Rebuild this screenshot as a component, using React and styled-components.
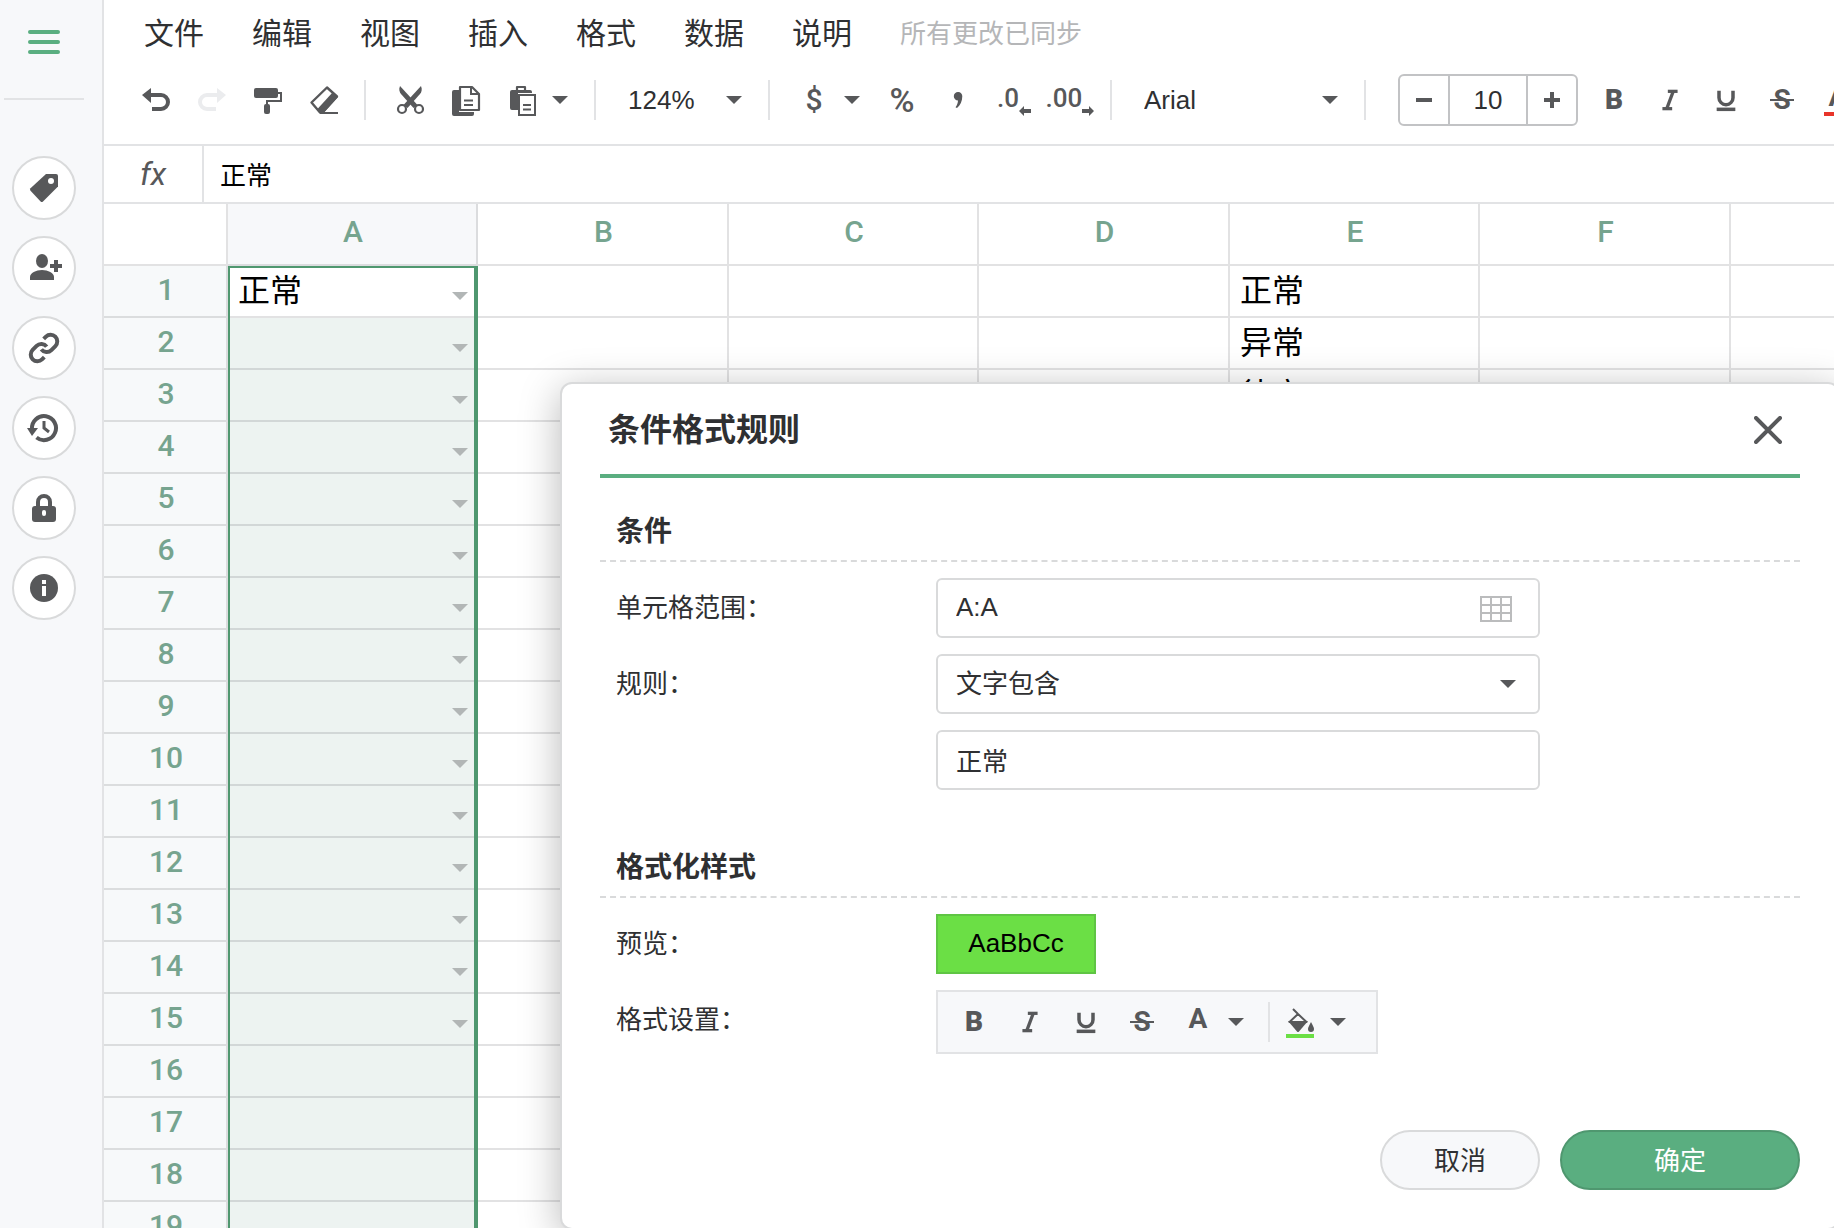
import React, { useState } from "react";
import styled, { createGlobalStyle, css } from "styled-components";
import { Italic, Underline, Link as LinkIcon } from "lucide-react";

const color = {
  text: "#2f3032",
  icon: "#57585a",
  muted: "#b5b6b8",
  line: "#e2e3e5",
  field: "#d9dadb",
  panel: "#f7f8fa",
  green: "#5aae80",
  greenDark: "#4f976f",
  heading: "#76a48f",
  fill: "#6bdf45",
};

const GlobalStyle = createGlobalStyle`
  *, *::before, *::after { box-sizing: border-box; }
  body {
    margin: 0;
    background: #fff;
    color: ${color.text};
    font-family: "Liberation Sans", "Noto Sans CJK SC", sans-serif;
    font-size: 26px;
  }
  button, input, select {
    margin: 0;
    padding: 0;
    border: 0;
    outline: 0;
    background: none;
    color: inherit;
    font: inherit;
  }
  button { cursor: pointer; }
`;

const Page = styled.div`
  position: relative;
  display: flex;
  height: 100vh;
  overflow: hidden;
`;

/* ---------- Side rail ---------- */

const Sidebar = styled.nav`
  flex: none;
  display: flex;
  flex-direction: column;
  width: 104px;
  padding-left: 4px;
  background: ${color.panel};
  border-right: 2px solid ${color.line};
`;

const MenuToggle = styled.button`
  display: flex;
  flex-direction: column;
  justify-content: center;
  align-items: center;
  gap: 6px;
  width: 80px;
  height: 98px;
  padding-bottom: 14px;

  span {
    width: 32px;
    height: 4px;
    border-radius: 2px;
    background: ${color.green};
  }
`;

const RailDivider = styled.hr`
  width: 80px;
  height: 2px;
  margin: 0;
  border: 0;
  background: ${color.line};
`;

const RailList = styled.div`
  display: flex;
  flex-direction: column;
  gap: 16px;
  padding: 56px 8px 0;
`;

const RoundButton = styled.button`
  display: grid;
  place-items: center;
  width: 64px;
  height: 64px;
  border: 2px solid ${color.field};
  border-radius: 50%;
  background: #fff;
  color: ${color.icon};
`;

/* ---------- Top area ---------- */

const Main = styled.main`
  flex: 1;
  min-width: 0;
  display: flex;
  flex-direction: column;
`;

const MenuBar = styled.div`
  flex: none;
  display: flex;
  align-items: center;
  gap: 48px;
  height: 66px;
  padding: 2px 0 0 40px;
  white-space: nowrap;
`;

const MenuItem = styled.button`
  font-size: 30px;
  line-height: 40px;
`;

const SyncState = styled.span`
  color: ${color.muted};
  line-height: 40px;
`;

const Toolbar = styled.div`
  flex: none;
  display: flex;
  align-items: center;
  height: 80px;
  padding: 0 0 10px 24px;
  overflow: hidden;
  border-bottom: 2px solid ${color.line};
`;

const Divider = styled.span`
  flex: none;
  width: 2px;
  height: 40px;
  margin: 0 ${(p) => p.$after ?? 16}px 0 ${(p) => p.$before ?? 12}px;
  background: ${color.line};
`;

const Tool = styled.button`
  flex: none;
  display: flex;
  align-items: center;
  justify-content: center;
  width: 56px;
  height: 40px;
  color: ${(p) => (p.disabled ? "#ebecee" : color.icon)};
`;

const CaretTool = styled.button`
  flex: none;
  display: flex;
  align-items: center;
  width: 32px;
  height: 40px;
  padding-left: 2px;
  color: ${color.icon};
`;

const Symbol = styled.span`
  font: 500 ${(p) => p.$size}px/32px Roboto, sans-serif;
`;

const Decimal = styled.span`
  display: flex;
  align-items: flex-end;
  height: 32px;
  font: 500 26px/28px Roboto, sans-serif;

  svg { flex: none; }
  span { align-self: flex-start; }
`;

const BoldMark = styled.span`
  font: 900 28px/32px Roboto, sans-serif;
`;

const StrikeMark = styled.span`
  display: grid;
  place-items: center;
  font: 700 28px/32px Roboto, sans-serif;

  &::before, span { grid-area: 1 / 1; }
  &::before {
    content: "";
    width: 24px;
    height: 2px;
    background: currentColor;
  }
`;

const SelectBox = styled.span`
  flex: none;
  display: grid;
  align-items: center;
  width: ${(p) => p.$width};

  > * { grid-area: 1 / 1; }
  > svg {
    justify-self: end;
    margin-right: ${(p) => p.$inset ?? 14}px;
    color: ${color.icon};
    pointer-events: none;
  }
`;

const ToolSelect = styled.select`
  appearance: none;
  width: 100%;
  height: 40px;
  padding: 0 32px 0 16px;
`;

const Stepper = styled.div`
  flex: none;
  display: flex;
  width: 180px;
  height: 52px;
  margin: 0 8px 0 16px;
  border: 2px solid #c2c3c5;
  border-radius: 6px;

  button {
    flex: none;
    display: grid;
    place-items: center;
    width: 48px;
    color: ${color.icon};
  }
  input {
    flex: 1;
    min-width: 0;
    border: solid #c2c3c5;
    border-width: 0 2px;
    text-align: center;
  }
`;

const ColorGlyph = styled.span`
  display: flex;
  flex-direction: column;
  align-items: center;
  gap: 2px;
  font: 700 28px/26px Roboto, sans-serif;

  &::after {
    content: "";
    width: 28px;
    height: 4px;
    background: ${(p) => p.$bar};
  }
`;

const FormulaBar = styled.div`
  flex: none;
  display: flex;
  height: 58px;
  border-bottom: 2px solid ${color.line};

  label {
    flex: none;
    width: 100px;
    border-right: 2px solid ${color.line};
    color: ${color.icon};
    font: italic 400 32px/56px Roboto, sans-serif;
    text-align: center;
  }
  input {
    flex: 1;
    min-width: 0;
    padding: 0 16px 2px;
    color: #000;
  }
`;

/* ---------- Grid ---------- */

const gridLine = "rgba(60, 62, 66, 0.15)";

const Sheet = styled.div`
  position: relative;
  flex: 1;
  min-height: 0;
  overflow: hidden;
`;

const Grid = styled.table`
  width: 100%;
  table-layout: fixed;
  border-collapse: separate;
  border-spacing: 0;

  th, td {
    height: 52px;
    padding: 0;
    border: solid ${gridLine};
    border-width: 0 2px 2px 0;
  }
  th:last-child, td:last-child { border-right-width: 0; }
`;

const headingText = css`
  padding: 0 0 2px 2px;
  color: ${color.heading};
  font: 500 30px/40px Roboto, sans-serif;
`;

const ColumnHead = styled.th`
  && {
    ${headingText}
    height: 62px;
    padding-bottom: 4px;
    background: ${(p) => (p.$active ? color.panel : "#fff")};
  }
`;

const RowHead = styled.th`
  && {
    ${headingText}
    background: #f7f9fa;
  }
`;

const Cell = styled.td`
  background: ${(p) => (p.$selected ? "#edf3f1" : "#fff")};
`;

const CellBody = styled.div`
  display: flex;
  align-items: center;
  justify-content: space-between;
  height: 50px;
  padding: 0 8px 0 10px;
  overflow: hidden;
  color: #000;
  font-size: 32px;
  line-height: 50px;
  white-space: nowrap;
`;

const CellDrop = styled.button`
  display: flex;
  margin-left: auto;
  padding-top: 10px;
  color: #b2b6b6;
`;

const Selection = styled.div`
  position: absolute;
  top: 62px;
  bottom: 0;
  left: 124px;
  width: 250px;
  border: solid ${color.greenDark};
  border-width: 2px 4px 0 2px;
  pointer-events: none;
`;

/* ---------- Rule window ---------- */

const Window = styled.section`
  position: absolute;
  top: 382px;
  left: 560px;
  width: 1280px;
  padding: 0 38px 38px;
  border: 2px solid ${color.field};
  border-radius: 12px;
  background: #fff;
  box-shadow: 0 8px 40px rgba(0, 0, 0, 0.28);
`;

const WindowHeader = styled.header`
  display: flex;
  align-items: center;
  justify-content: space-between;
  height: 94px;
  padding: 2px 18px 0 8px;
  border-bottom: 4px solid ${color.green};

  h2 {
    margin: 0;
    font-size: 32px;
    line-height: 48px;
  }
  button {
    display: flex;
    color: ${color.icon};
  }
`;

const Section = styled.section`
  margin-bottom: 24px;
`;

const SectionTitle = styled.h3`
  margin: 0 0 16px;
  padding: 34px 16px 8px;
  border-bottom: 2px dashed ${color.field};
  font-size: 28px;
  line-height: 40px;
`;

const Fields = styled.div`
  display: grid;
  grid-template-columns: 320px 604px;
  gap: 16px 0;
  padding-left: 16px;
`;

const Label = styled.label`
  grid-column: 1;
  line-height: 60px;
`;

const control = css`
  width: 100%;
  height: 60px;
  padding: 0 18px;
  border: 2px solid ${color.field};
  border-radius: 6px;
  background: #fff;
`;

const TextField = styled.input`
  grid-column: 2;
  ${control}
  padding-bottom: 2px;
`;

const SelectField = styled.select`
  appearance: none;
  ${control}
`;

const RangeField = styled.span`
  display: grid;
  align-items: center;

  > * { grid-area: 1 / 1; }
  button {
    justify-self: end;
    display: flex;
    margin-right: 28px;
    padding-top: 2px;
    color: #bbbcbd;
  }
`;

const Preview = styled.output`
  display: block;
  width: 160px;
  height: 60px;
  border: 2px solid #5fc544;
  background: ${color.fill};
  color: #000;
  line-height: 54px;
  text-align: center;
`;

const FormatBar = styled.div`
  display: flex;
  align-items: center;
  justify-self: start;
  width: 442px;
  height: 64px;
  padding-left: 8px;
  border: 2px solid ${color.line};
  background: ${color.panel};
`;

const Footer = styled.footer`
  display: flex;
  justify-content: flex-end;
  gap: 20px;
  padding-top: 52px;
`;

const ActionButton = styled.button`
  width: ${(p) => (p.$primary ? 240 : 160)}px;
  height: 60px;
  padding-bottom: 4px;
  border: 2px solid ${(p) => (p.$primary ? color.greenDark : color.field)};
  border-radius: 30px;
  background: ${(p) => (p.$primary ? color.green : color.panel)};
  color: ${(p) => (p.$primary ? "#fff" : color.text)};
`;

/* ---------- Icons ---------- */

const Glyph = ({ children }) => (
  <svg width="32" height="32" viewBox="0 0 32 32" fill="none" overflow="visible" aria-hidden="true">
    {children}
  </svg>
);

const Caret = () => (
  <svg width="16" height="8" viewBox="0 0 16 8" aria-hidden="true">
    <path d="M0 0h16L8 8z" fill="currentColor" />
  </svg>
);

const UndoIcon = () => (
  <Glyph>
    <path d="M2 11 11 4v15z" fill="currentColor" />
    <path d="M10 11h11a7 7 0 0 1 0 14h-9" stroke="currentColor" strokeWidth="4" />
  </Glyph>
);

const RedoIcon = () => (
  <Glyph>
    <path d="M30 11 21 4v15z" fill="currentColor" />
    <path d="M22 11H11a7 7 0 0 0 0 14h9" stroke="currentColor" strokeWidth="4" />
  </Glyph>
);

const RollerIcon = () => (
  <Glyph>
    <rect x="2" y="4" width="24" height="10" rx="2" fill="currentColor" />
    <path d="M26 9h3v8H15v4" stroke="currentColor" strokeWidth="2" />
    <rect x="12" y="20" width="6" height="10" rx="2" fill="currentColor" />
  </Glyph>
);

const EraserIcon = () => (
  <Glyph>
    <path d="M19 3.500 29 12.500 14.500 28.500H12L3.500 18.500z" stroke="currentColor" strokeWidth="2.400" strokeLinejoin="round" />
    <path d="M24.500 8.500 30 13 15 29.500h-3l-3-4z" fill="currentColor" />
    <path d="M12 29h18" stroke="currentColor" strokeWidth="2" />
  </Glyph>
);

const CutIcon = () => (
  <Glyph>
    <path d="M6 2c-1.500 3.500-.500 6 1 8l12.500 14 4-3z" fill="currentColor" />
    <path d="M27 2c1.500 3.500.500 6-1 8L13.500 24l-4-3z" fill="currentColor" />
    <circle cx="8" cy="25" r="4" fill="#fff" stroke="currentColor" strokeWidth="2.200" />
    <circle cx="25" cy="25" r="4" fill="#fff" stroke="currentColor" strokeWidth="2.200" />
  </Glyph>
);

const CopyIcon = () => (
  <Glyph>
    <path d="M2 8a2 2 0 0 1 2-2h5v22h15v2a2 2 0 0 1-2 2H4a2 2 0 0 1-2-2z" fill="currentColor" />
    <path d="M10 3h12l7 7v16H10z" stroke="currentColor" strokeWidth="2.200" strokeLinejoin="round" />
    <path d="M21 3v7h8M14 16.500h9M14 21h9" stroke="currentColor" strokeWidth="2" />
  </Glyph>
);

const PasteIcon = () => (
  <Glyph>
    <path d="M6 6h18a2 2 0 0 1 2 2v1H12v17H6a2 2 0 0 1-2-2V8a2 2 0 0 1 2-2z" fill="currentColor" />
    <path d="M11 8V3h8v5" stroke="currentColor" strokeWidth="2.200" strokeLinejoin="round" />
    <path d="M13 11h16v20H13zM17 21h8M17 25.500h8" stroke="currentColor" strokeWidth="2" />
  </Glyph>
);

const SeparatorIcon = () => (
  <Glyph>
    <path d="M16 8a4 4 0 0 1 4.300 4.200c0 5-2 9.300-5.300 11.800l-1.500-.800c1.600-2 2.400-4.300 2.500-6.800A4.200 4.200 0 1 1 16 8z" fill="currentColor" />
  </Glyph>
);

const ShiftArrow = ({ right }) => (
  <svg width="12" height="10" viewBox="0 0 12 10" aria-hidden="true">
    <path d={right ? "M12 5 7 0v3H0v4h7v3z" : "M0 5l5-5v3h7v4H5v3z"} fill="currentColor" />
  </svg>
);

const MinusIcon = () => (
  <svg width="16" height="16" viewBox="0 0 16 16" aria-hidden="true">
    <path d="M0 6h16v4H0z" fill="currentColor" />
  </svg>
);

const PlusIcon = () => (
  <svg width="16" height="16" viewBox="0 0 16 16" aria-hidden="true">
    <path d="M6 0h4v6h6v4h-6v6H6v-6H0V6h6z" fill="currentColor" />
  </svg>
);

const TagIcon = () => (
  <Glyph>
    <path
      d="M18 2h10a2 2 0 0 1 2 2v10.500L15 29.500q-1.200 1-2.400 0L2.500 18.700q-1-1.200 0-2.400z"
      fill="currentColor"
    />
    <circle cx="23" cy="9" r="3" fill="#fff" />
  </Glyph>
);

const AddPersonIcon = () => (
  <Glyph>
    <ellipse cx="14" cy="9" rx="6" ry="7" fill="currentColor" />
    <path d="M2 28v-3c0-4 6-7 12-7s12 3 12 7v3z" fill="currentColor" />
    <path d="M28 8v12M22 14h12" stroke="currentColor" strokeWidth="4" />
  </Glyph>
);

const HistoryIcon = () => (
  <Glyph>
    <path d="M4 17a12 12 0 1 1 4.500 8.500" stroke="currentColor" strokeWidth="4" />
    <path d="M-1 16h11l-6 8z" fill="currentColor" />
    <path d="M16 9v7l5 4" stroke="currentColor" strokeWidth="3" />
  </Glyph>
);

const LockIcon = () => (
  <Glyph>
    <path d="M10 15v-5a6 6 0 0 1 12 0v5" stroke="currentColor" strokeWidth="4" />
    <rect x="4" y="14" width="24" height="16" rx="3" fill="currentColor" />
    <rect x="14" y="18" width="4" height="6" rx="2" fill="#fff" />
  </Glyph>
);

const InfoIcon = () => (
  <Glyph>
    <circle cx="16" cy="16" r="14" fill="currentColor" />
    <path d="M14 8h4v4h-4zM14 14h4v10h-4z" fill="#fff" />
  </Glyph>
);

const BucketIcon = () => (
  <Glyph>
    <path d="M9 3l5 5M14 8l-8.500 8h17z" stroke="currentColor" strokeWidth="2" strokeLinejoin="round" />
    <path d="M4 15h20l-9 10.500q-1 1-2 0z" fill="currentColor" />
    <path d="M27 16c2 4 3 5.500 3 7a3 3 0 0 1-6 0c0-1.500 1-3 3-7z" fill="currentColor" />
    <path d="M2 28h28v4H2z" fill={color.fill} />
  </Glyph>
);

const RangeIcon = () => (
  <svg width="32" height="26" viewBox="0 0 32 26" fill="none" aria-hidden="true">
    <path d="M1 1h30v24H1zM1 9h30M1 17h30M11 1v24M21 1v24" stroke="currentColor" strokeWidth="2" />
  </svg>
);

const CloseIcon = () => (
  <svg width="28" height="28" viewBox="0 0 28 28" aria-hidden="true">
    <path d="M2 2l24 24M26 2 2 26" stroke="currentColor" strokeWidth="4" strokeLinecap="round" />
  </svg>
);

const TextStyleTools = ({ bar }) => (
  <>
    <Tool type="button" aria-label="加粗"><BoldMark>B</BoldMark></Tool>
    <Tool type="button" aria-label="斜体"><Italic size={26} strokeWidth={3} strokeLinecap="butt" /></Tool>
    <Tool type="button" aria-label="下划线"><Underline size={28} strokeWidth={3} strokeLinecap="butt" /></Tool>
    <Tool type="button" aria-label="删除线"><StrikeMark><span>S</span></StrikeMark></Tool>
    <Tool type="button" aria-label="文字颜色"><ColorGlyph $bar={bar}>A</ColorGlyph></Tool>
    <CaretTool type="button" aria-label="选择文字颜色"><Caret /></CaretTool>
  </>
);

/* ---------- Data ---------- */

const menus = ["文件", "编辑", "视图", "插入", "格式", "数据", "说明"];

const rail = [
  ["标签", TagIcon],
  ["添加协作者", AddPersonIcon],
  ["链接", () => <LinkIcon size={32} strokeWidth={3} strokeLinecap="butt" />],
  ["历史", HistoryIcon],
  ["保护", LockIcon],
  ["信息", InfoIcon],
];

const columns = [
  ["A", 250],
  ["B", 251],
  ["C", 250],
  ["D", 251],
  ["E", 250],
  ["F", 251],
  ["", undefined],
];

const values = { A1: "正常", E1: "正常", E2: "异常", E3: "待定" };
const rows = Array.from({ length: 20 }, (_, i) => i + 1);
const lastListRow = 15;

export default function App() {
  const [size, setSize] = useState(10);
  return (
    <>
      <GlobalStyle />
      <Page lang="zh-CN">
        <Sidebar>
          <MenuToggle type="button" aria-label="菜单"><span /><span /><span /></MenuToggle>
          <RailDivider />
          <RailList>
            {rail.map(([name, Icon]) => (
              <RoundButton key={name} type="button" aria-label={name}><Icon /></RoundButton>
            ))}
          </RailList>
        </Sidebar>

        <Main>
          <MenuBar>
            {menus.map((m) => <MenuItem key={m} type="button">{m}</MenuItem>)}
            <SyncState>所有更改已同步</SyncState>
          </MenuBar>

          <Toolbar>
            <Tool type="button" aria-label="撤销"><UndoIcon /></Tool>
            <Tool type="button" aria-label="重做" disabled><RedoIcon /></Tool>
            <Tool type="button" aria-label="格式刷"><RollerIcon /></Tool>
            <Tool type="button" aria-label="清除格式"><EraserIcon /></Tool>
            <Divider />
            <Tool type="button" aria-label="剪切"><CutIcon /></Tool>
            <Tool type="button" aria-label="复制"><CopyIcon /></Tool>
            <Tool type="button" aria-label="粘贴"><PasteIcon /></Tool>
            <CaretTool type="button" aria-label="粘贴选项"><Caret /></CaretTool>
            <Divider />
            <SelectBox $width="144px">
              <ToolSelect aria-label="缩放"><option>124%</option></ToolSelect>
              <Caret />
            </SelectBox>
            <Divider />
            <Tool type="button" aria-label="货币"><Symbol $size={30}>$</Symbol></Tool>
            <CaretTool type="button" aria-label="货币选项"><Caret /></CaretTool>
            <Tool type="button" aria-label="百分比"><Symbol $size={34}>%</Symbol></Tool>
            <Tool type="button" aria-label="千位分隔"><SeparatorIcon /></Tool>
            <Tool type="button" aria-label="减少小数位"><Decimal><span>.0</span><ShiftArrow /></Decimal></Tool>
            <Tool type="button" aria-label="增加小数位"><Decimal><span>.00</span><ShiftArrow right /></Decimal></Tool>
            <Divider />
            <SelectBox $width="224px">
              <ToolSelect aria-label="字体"><option>Arial</option></ToolSelect>
              <Caret />
            </SelectBox>
            <Divider />
            <Stepper>
              <button type="button" aria-label="减小字号" onClick={() => setSize(size - 1)}><MinusIcon /></button>
              <input aria-label="字号" value={size} onChange={(e) => setSize(Number(e.target.value) || 0)} />
              <button type="button" aria-label="增大字号" onClick={() => setSize(size + 1)}><PlusIcon /></button>
            </Stepper>
            <TextStyleTools bar="#e8342a" />
          </Toolbar>

          <FormulaBar>
            <label htmlFor="formula">fx</label>
            <input id="formula" defaultValue="正常" />
          </FormulaBar>

          <Sheet>
            <Grid>
              <colgroup>
                <col width="124" />
                {columns.map(([name, width]) => <col key={name} width={width} />)}
              </colgroup>
              <thead>
                <tr>
                  <ColumnHead />
                  {columns.map(([name]) => (
                    <ColumnHead key={name} scope="col" $active={name === "A"}>{name}</ColumnHead>
                  ))}
                </tr>
              </thead>
              <tbody>
                {rows.map((row) => (
                  <tr key={row}>
                    <RowHead scope="row">{row}</RowHead>
                    {columns.map(([name]) => (
                      <Cell key={name} $selected={name === "A" && row > 1}>
                        <CellBody>
                          {values[name + row]}
                          {name === "A" && row <= lastListRow && (
                            <CellDrop type="button" aria-label={`A${row} 选项`}><Caret /></CellDrop>
                          )}
                        </CellBody>
                      </Cell>
                    ))}
                  </tr>
                ))}
              </tbody>
            </Grid>
            <Selection />
          </Sheet>
        </Main>

        <Window role="dialog" aria-labelledby="rule-title">
          <WindowHeader>
            <h2 id="rule-title">条件格式规则</h2>
            <button type="button" aria-label="关闭"><CloseIcon /></button>
          </WindowHeader>

          <Section>
            <SectionTitle>条件</SectionTitle>
            <Fields>
              <Label htmlFor="range">单元格范围：</Label>
              <RangeField>
                <TextField id="range" defaultValue="A:A" />
                <button type="button" aria-label="选择范围"><RangeIcon /></button>
              </RangeField>
              <Label htmlFor="rule">规则：</Label>
              <SelectBox $width="100%" $inset={24}>
                <SelectField id="rule"><option>文字包含</option></SelectField>
                <Caret />
              </SelectBox>
              <TextField aria-label="规则值" defaultValue="正常" />
            </Fields>
          </Section>

          <Section>
            <SectionTitle>格式化样式</SectionTitle>
            <Fields>
              <Label htmlFor="preview">预览：</Label>
              <Preview id="preview">AaBbCc</Preview>
              <Label as="span" id="format-label">格式设置：</Label>
              <FormatBar role="toolbar" aria-labelledby="format-label">
                <TextStyleTools bar="transparent" />
                <Divider $before={10} $after={2} />
                <Tool type="button" aria-label="填充颜色"><BucketIcon /></Tool>
                <CaretTool type="button" aria-label="选择填充颜色"><Caret /></CaretTool>
              </FormatBar>
            </Fields>
          </Section>

          <Footer>
            <ActionButton type="button">取消</ActionButton>
            <ActionButton type="button" $primary>确定</ActionButton>
          </Footer>
        </Window>
      </Page>
    </>
  );
}
